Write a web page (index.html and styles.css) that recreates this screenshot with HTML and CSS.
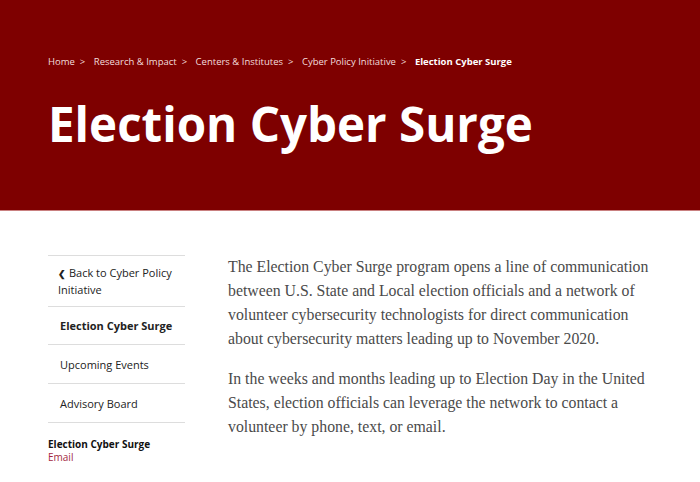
FILE: index.html
```html
<!DOCTYPE html>
<html>
<head>
<link rel="stylesheet" href="styles.css">
</head>
<body>
<header class="hero">
  <nav class="crumbs">
    <a href="#">Home</a><span class="sep">&gt;</span>
    <a href="#">Research &amp; Impact</a><span class="sep">&gt;</span>
    <a href="#">Centers &amp; Institutes</a><span class="sep">&gt;</span>
    <a href="#">Cyber Policy Initiative</a><span class="sep">&gt;</span>
    <strong>Election Cyber Surge</strong>
  </nav>
  <h1 class="title">Election Cyber Surge</h1>
</header>
<div id="main">
  <aside class="side">
    <ul class="sidenav">
      <li><a href="#" class="back"><span class="chev">&#10094;</span>Back to Cyber Policy<br>Initiative</a></li>
      <li><a href="#" class="current">Election Cyber Surge</a></li>
      <li><a href="#">Upcoming Events</a></li>
      <li><a href="#">Advisory Board</a></li>
    </ul>
    <div class="contact">
      <b>Election Cyber Surge</b>
      <a href="#">Email</a>
    </div>
  </aside>
  <section class="copy">
    <p>The Election Cyber Surge program opens a line of communication between U.S. State and Local election officials and a network of volunteer cybersecurity technologists for direct communication about cybersecurity matters leading up to November 2020.</p>
    <p>In the weeks and months leading up to Election Day in the United States, election officials can leverage the network to contact a volunteer by phone, text, or email.</p>
  </section>
</div>
</body>
</html>
```
FILE: styles.css
```css
body {
  margin: 0;
  background-color: #fff;
  font-family: "Open Sans", sans-serif;
}

.hero {
  background-color: #7e0000;
  height: 211px;
  box-sizing: border-box;
  padding: 55px 48px 0;
  border-bottom: 1px solid #c98080;
}

.crumbs {
  font-size: 9.5px;
  color: #f3dede;
  line-height: 14px;
}
.crumbs a {
  color: #f3dede;
  text-decoration: none;
}
.crumbs .sep {
  margin: 0 6px 0 5px;
}
.crumbs strong {
  color: #fff;
}

.title {
  margin: 25px 0 0;
  font-size: 47.5px;
  line-height: 60px;
  font-weight: 700;
  color: #fff;
}

#main {
  display: flex;
  padding: 44px 0 0 48px;
  gap: 43px;
}

.side {
  width: 137px;
  flex: none;
}

.sidenav {
  list-style: none;
  margin: 0;
  padding: 0;
  border-top: 1px solid #ddd;
}
.sidenav li {
  border-bottom: 1px solid #ddd;
}
.sidenav a {
  display: block;
  padding: 11px 12px 10px;
  font-size: 11px;
  line-height: 16px;
  color: #222;
  text-decoration: none;
}
.sidenav li:nth-child(n+3) a {
  padding-top: 12px;
}
.sidenav a.back {
  padding: 9px 0 8px 10px;
}
.sidenav .chev {
  font-size: 9px;
  margin-right: 3px;
  font-weight: 700;
}
.sidenav a.current {
  font-weight: 700;
}

.contact {
  padding-top: 15px;
  font-size: 10px;
  line-height: 13px;
}
.contact b {
  display: block;
  color: #111;
}
.contact a {
  color: #a3283f;
  text-decoration: none;
}

.copy {
  flex: none;
  width: 432px;
}
.copy p {
  margin: 0 0 16px;
  font-family: "Liberation Serif", serif;
  font-size: 15.8px;
  line-height: 24px;
  color: #4a4a4a;
}
```
